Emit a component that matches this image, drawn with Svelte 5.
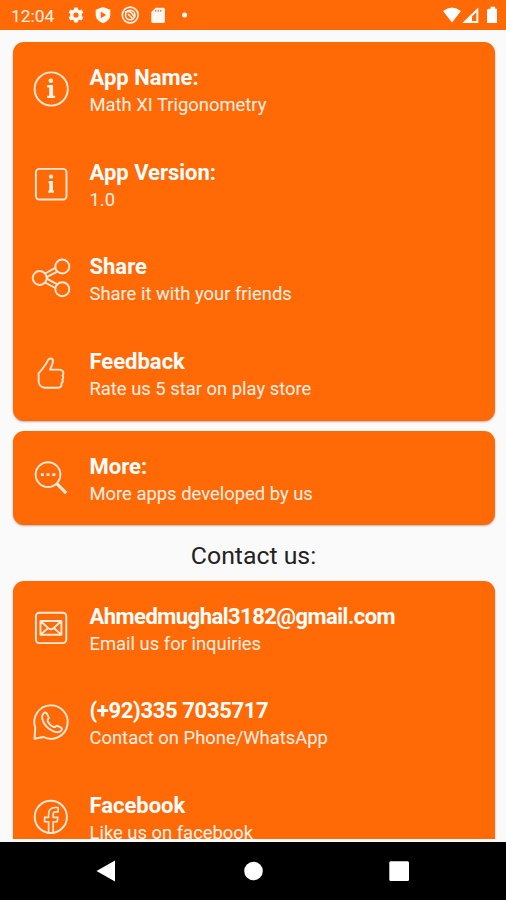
<script>
  const about = [
    { icon: 'info', title: 'App Name:', detail: 'Math XI Trigonometry' },
    { icon: 'version', title: 'App Version:', detail: '1.0' },
    { icon: 'share', title: 'Share', detail: 'Share it with your friends' },
    { icon: 'like', title: 'Feedback', detail: 'Rate us 5 star on play store' }
  ];
  const more = [{ icon: 'search', title: 'More:', detail: 'More apps developed by us' }];
  const contact = [
    { icon: 'mail', title: 'Ahmedmughal3182@gmail.com', detail: 'Email us for inquiries' },
    { icon: 'phone', title: '(+92)335 7035717', detail: 'Contact on Phone/WhatsApp' },
    { icon: 'facebook', title: 'Facebook', detail: 'Like us on facebook' }
  ];
</script>

{#snippet glyph(name)}
  <svg class="glyph" viewBox="0 0 40 40">
    {#if name === 'info'}
      <circle cx="20.2" cy="20" r="16.6" />
      <circle class="solid" cx="19.8" cy="11.7" r="2.3" />
      <path class="solid" d="M16.2 16h5.9v10.7h2V29h-7.9v-2.3h2v-8.3h-2z" />
    {:else if name === 'version'}
      <rect x="4.9" y="4.9" width="30.6" height="30.6" rx="3.5" />
      <circle class="solid" cx="20" cy="12.7" r="2.1" />
      <path class="solid" d="M17.6 17h4.3v9.4h1v2.4h-5.6v-2.4h1v-7.2h-.7z" />
    {:else if name === 'share'}
      <circle cx="8.7" cy="20" r="7" />
      <circle cx="31.3" cy="8.5" r="7" />
      <circle cx="31.3" cy="31.2" r="7" />
      <path d="M14 15.5l10.3-5.6M15.7 19.2l10.5-5.6M15.7 20.6l10.3 5.6M14 24.5l10.3 5.5" />
    {:else if name === 'like'}
      <path d="M7.6 20.4C10.8 16.8 14.6 12.2 16.9 7.4c1.2-2.6 4.8-2.6 5 .1.2 3-1.3 5.9-2.9 9.1h8.4c3.1 0 5.2 1.2 5 3.6 0 1-.4 1.8-.9 2.3 1.1.9 1 3.2-.2 4.1.8 1.3.3 3-.8 3.7.3 3-.9 4.4-3.4 4.4H13.7c-4-.2-6.3-3.2-6.1-7.3z" />
    {:else if name === 'search'}
      <circle cx="17" cy="16.6" r="12.4" />
      <path d="M25.6 25.4l9.6 9.8" stroke-width="3.2" stroke-linecap="butt" />
      <path class="solid" d="M9.9 15.2h2.9V18H9.9zM15.6 15.2h2.9V18h-2.9zM21.4 15.2h2.9V18h-2.9z" />
    {:else if name === 'mail'}
      <rect x="4.9" y="4.7" width="30.4" height="30.4" rx="3.5" />
      <path d="M9.5 13h20.9v13.7H9.5zM9.8 13.3l7.6 6.9c1.5 1.4 3.5 1.4 5 0l7.7-6.9M9.8 26.4l7-6.2M30.1 26.4l-7-6.2" />
    {:else if name === 'phone'}
      <path d="M3.5 36.8l.8-11A16.7 16.7 0 1 1 12.5 35z" />
      <path d="M12.6 11.3c1.3-1.3 2.6-1.1 3.3.3l1.8 3.8c.5 1.2-1.5 2.2-1.1 3.4 1 2.7 3.7 5.2 6.3 6.2 1.3.5 2.3-1.7 3.5-1.2l3.5 1.8c1.4.7 1.4 2.1.1 3.3-2.2 2.1-5.2 1.7-9.1-.4-4-2.1-7.3-5.5-9-9.7-1.2-3.3-1-5.8.7-7.5z" />
    {:else}
      <circle cx="19.8" cy="19.9" r="16.1" />
      <path d="M17.6 35.5V24.7h-4v-4.3h4v-3.1c0-4.4 2.6-6.8 6.6-6.8h3v4.4h-2.6c-1.6 0-2.4.8-2.4 2.3v3.2h4.7l-.8 4.3h-3.9v10.8" stroke-width="1.6" />
    {/if}
  </svg>
{/snippet}

{#snippet row(item)}
  <div class="row">
    {@render glyph(item.icon)}
    <div class="copy">
      <strong class={item.icon}>{item.title}</strong>
      <span>{item.detail}</span>
    </div>
  </div>
{/snippet}

<div class="screen">
  <header>
    <span class="time">12:04</span>
    <svg class="notices" viewBox="0 0 124 20">
      <path fill-rule="evenodd" d="M6.3 2.5h3.4l.5 2 1.3.8 2.1-.7 1.7 2.9-1.5 1.5v2l1.5 1.5-1.7 2.9-2.1-.7-1.3.8-.5 2H6.3l-.5-2-1.3-.8-2.1.7-1.7-2.9L2.2 11V9L.7 7.5l1.7-2.9 2.1.7 1.3-.8zM8 7.4a2.6 2.6 0 1 0 0 5.2 2.6 2.6 0 0 0 0-5.2z" />
      <path fill-rule="evenodd" d="M35 2l7.3 2.7v5.1c0 3.8-2.8 6.7-7.3 8.5-4.5-1.8-7.3-4.7-7.3-8.5V4.7zM32.8 6.6v6.6l5.3-3.3z" />
      <g class="lines"><circle cx="62.2" cy="10" r="7.9" /><circle cx="62.2" cy="10" r="4.7" /><path d="M57 7.5c3-2 5.5-1 7 1l3 4M60 9l4.5 4.5" /></g>
      <path fill-rule="evenodd" d="M87.6 2.8h7.6c1.1 0 1.7.6 1.7 1.7v11.8c0 1.1-.6 1.7-1.7 1.7H85c-1.1 0-1.7-.6-1.7-1.7V7zM87.2 4.7v2h1.1v-2zm2.5 0v2h1.1v-2zm2.5 0v2h1.1v-2z" />
      <circle cx="116.6" cy="10" r="2.5" />
    </svg>
    <svg class="signals" viewBox="0 0 56 20">
      <path d="M1 6.1Q10-1.3 19 6.1L10 17.5z" />
      <path fill-rule="evenodd" d="M36.3 2.5V18H20.3zM34.4 7.2L30 11.6v4.5h4.4z" />
      <path d="M46.9 3.7h1.8V1.8h4.4v1.9H55v14.4h-10V5.6q0-1.9 1.9-1.9z" />
    </svg>
  </header>
  <main>
    <section class="card">{#each about as item}{@render row(item)}{/each}</section>
    <section class="card">{#each more as item}{@render row(item)}{/each}</section>
    <h1>Contact us:</h1>
    <section class="card">{#each contact as item}{@render row(item)}{/each}</section>
  </main>
  <nav>
    <svg viewBox="0 0 506 58">
      <path d="M96.5 29L115 18.5v21z" />
      <circle cx="253.5" cy="29" r="9.3" />
      <rect x="389.3" y="19.3" width="19.7" height="19.7" rx="1.5" />
    </svg>
  </nav>
</div>

<style>
  .screen {
    width: 506px;
    height: 900px;
    display: flex;
    flex-direction: column;
    overflow: hidden;
    background: #fafafa;
    font-family: Roboto, "Liberation Sans", sans-serif;
    color: #fff;
  }
  header {
    flex: none;
    box-sizing: border-box;
    height: 29.5px;
    display: flex;
    align-items: flex-start;
    padding: 5px 8px 0 11px;
    background: #ff6a06;
  }
  .time {
    width: 57px;
    font-size: 17.4px;
    line-height: 22px;
    color: #fff2ea;
  }
  .notices { width: 124px; height: 20px; fill: #fff8f2; }
  .signals { width: 56px; height: 20px; margin-left: auto; fill: #fff; }
  .lines { fill: none; stroke: #fff2ea; stroke-width: 1.6; }
  main {
    height: 809.5px;
    flex: none;
    box-sizing: border-box;
    overflow: hidden;
    padding: 12.8px 11.5px 0 12.5px;
  }
  .card {
    margin-bottom: 10.5px;
    border-radius: 11px;
    background: #ff6a06;
    box-shadow: 0 1px 2px rgba(70, 35, 20, 0.35);
  }
  .row {
    height: 94.6px;
    box-sizing: border-box;
    display: flex;
    padding: 27px 0 0 18.5px;
  }
  .card:nth-of-type(2) .row { height: 94px; }
  .glyph {
    width: 40px;
    height: 40px;
    flex: none;
    fill: none;
    stroke: #ffe9da;
    stroke-width: 1.9;
    stroke-linejoin: round;
  }
  .solid { fill: #fff0e6; stroke: none; }
  .copy {
    display: flex;
    flex-direction: column;
    margin: -5px 0 0 18.5px;
    white-space: nowrap;
  }
  strong { font-size: 22px; line-height: 27px; font-weight: 700; }
  .mail { letter-spacing: -0.53px; }
  .phone { letter-spacing: -0.35px; }
  .copy span { font-size: 18.4px; line-height: 27.6px; color: #fff0e7; }
  h1 {
    margin: -10.5px 0 0;
    height: 55.6px;
    text-align: center;
    font-size: 24.8px;
    line-height: 61px;
    font-weight: 400;
    color: #222;
  }
  nav {
    flex: none;
    height: 58.5px;
    margin-top: 2.5px;
    background: #000;
  }
  nav svg { display: block; width: 506px; height: 58px; fill: #fff; }
</style>
